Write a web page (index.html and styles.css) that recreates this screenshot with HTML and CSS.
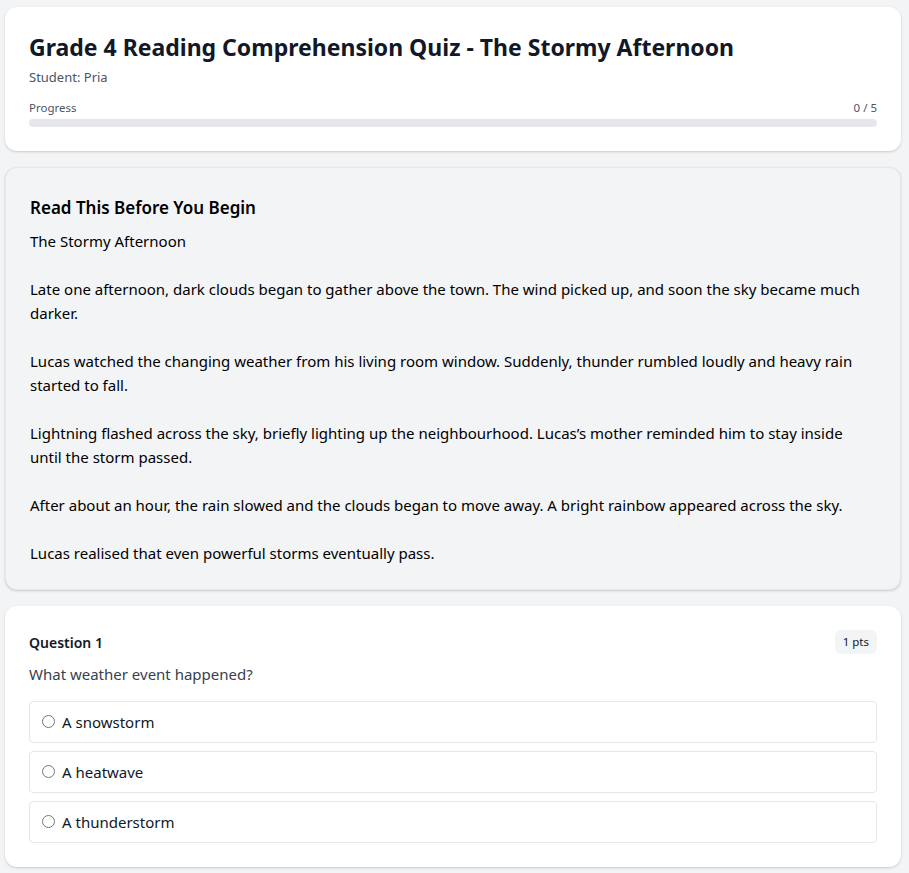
FILE: index.html
```html
<!DOCTYPE html>
<html>
<head>
<meta charset="utf-8">
<link rel="stylesheet" href="styles.css">
</head>
<body>
<div class="page">
  <section class="card header-card">
    <h1 class="title">Grade 4 Reading Comprehension Quiz - The Stormy Afternoon</h1>
    <div class="student">Student: Pria</div>
    <div class="progress-row"><span>Progress</span><span>0 / 5</span></div>
    <div class="progress-bar"><div class="progress-fill" style="width:0%"></div></div>
  </section>

  <section class="card passage-card">
    <h2 class="passage-title">Read This Before You Begin</h2>
    <div class="passage">The Stormy Afternoon

Late one afternoon, dark clouds began to gather above the town. The wind picked up, and soon the sky became much darker.

Lucas watched the changing weather from his living room window. Suddenly, thunder rumbled loudly and heavy rain started to fall.

Lightning flashed across the sky, briefly lighting up the neighbourhood. Lucas’s mother reminded him to stay inside until the storm passed.

After about an hour, the rain slowed and the clouds began to move away. A bright rainbow appeared across the sky.

Lucas realised that even powerful storms eventually pass.</div>
  </section>

  <section class="card question-card">
    <div class="q-head">
      <span class="q-num">Question 1</span>
      <span class="pts">1 pts</span>
    </div>
    <div class="q-text">What weather event happened?</div>
    <div class="options">
      <label class="option"><input type="radio" name="q1" class="radio"><span>A snowstorm</span></label>
      <label class="option"><input type="radio" name="q1" class="radio"><span>A heatwave</span></label>
      <label class="option"><input type="radio" name="q1" class="radio"><span>A thunderstorm</span></label>
    </div>
  </section>
</div>
</body>
</html>
```

FILE: styles.css
```css
html, body {
  margin: 0;
  padding: 0;
  background: #f3f4f6;
  font-family: "Noto Sans", "Open Sans", sans-serif;
  color: #111827;
}
.page {
  padding: 7px 8px 6px 5px;
  display: flex;
  flex-direction: column;
  gap: 16px;
}
.card {
  background: #ffffff;
  border-radius: 12px;
  box-shadow: 0 1px 3px rgba(0,0,0,0.12), 0 1px 2px rgba(0,0,0,0.06);
  padding: 24px;
}
.title {
  margin: 0;
  font-size: 23px;
  font-weight: 700;
  line-height: 32px;
  color: #111827;
}
.student {
  margin-top: 4px;
  font-size: 13px;
  line-height: 20px;
  color: #4b5563;
}
.progress-row {
  margin-top: 12px;
  display: flex;
  justify-content: space-between;
  font-size: 11.5px;
  line-height: 18px;
  color: #4b5563;
}
.progress-bar {
  margin-top: 2px;
  height: 8px;
  background: #e5e7eb;
  border-radius: 4px;
  overflow: hidden;
}
.progress-fill {
  height: 100%;
  background: #3b82f6;
}
.passage-card {
  background: #f3f4f6;
  border: 1px solid #e5e7eb;
  padding: 24px 24px 24px 24px;
}
.passage-title {
  margin: 2px 0 7px;
  font-size: 17px;
  font-weight: 600;
  line-height: 28px;
  color: #000;
}
.passage {
  white-space: pre-line;
  font-size: 15px;
  line-height: 24px;
  color: #000;
}
.q-head {
  display: flex;
  justify-content: space-between;
  align-items: center;
}
.q-num {
  font-size: 14px;
  font-weight: 600;
  color: #111827;
}
.pts {
  background: #f3f4f6;
  border-radius: 6px;
  padding: 3px 8px;
  font-size: 11.5px;
  line-height: 18px;
  color: #111827;
}
.q-text {
  margin-top: 8px;
  font-size: 15px;
  line-height: 24px;
  color: #374151;
}
.options {
  margin-top: 15px;
  display: flex;
  flex-direction: column;
  gap: 8px;
}
.option {
  display: flex;
  align-items: center;
  gap: 7px;
  height: 40px;
  padding: 0 12px;
  border: 1px solid #e5e7eb;
  border-radius: 4px;
  font-size: 15px;
  color: #111827;
}
.radio {
  margin: 0;
  width: 13px;
  height: 13px;
  position: relative;
  top: -1px;
}
```
